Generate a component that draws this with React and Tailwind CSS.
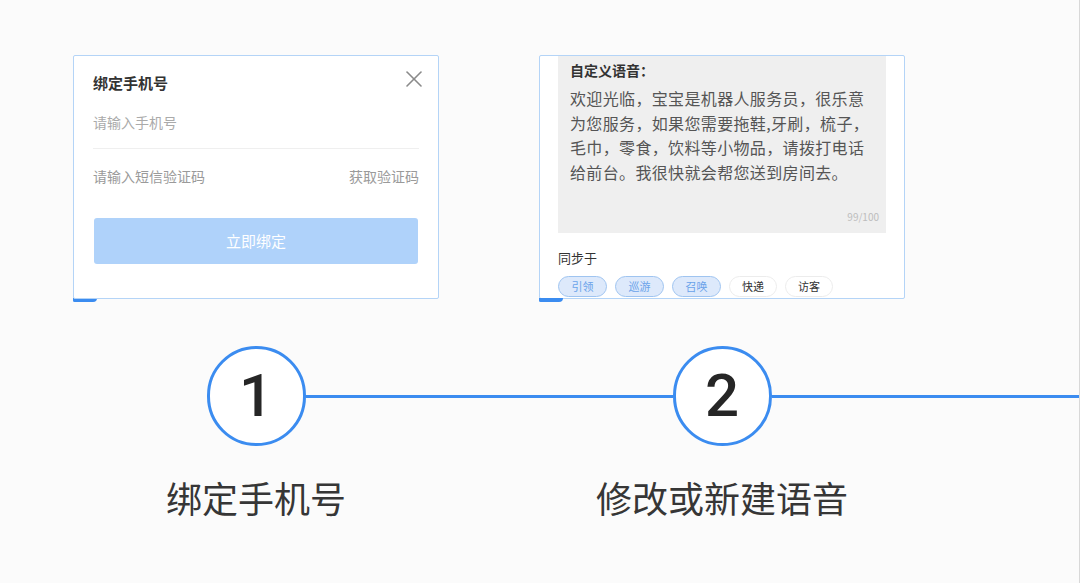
import React from "react";

const CJK = { fontFamily: '"Noto Sans CJK SC", "Noto Sans", sans-serif' };

function CloseIcon() {
  return (
    <svg width="18" height="18" viewBox="0 0 18 18" fill="none" stroke="#8a8a8a" strokeWidth="1.6" strokeLinecap="round">
      <path d="M2 2 L16 16" />
      <path d="M16 2 L2 16" />
    </svg>
  );
}

function BindPhoneCard() {
  return (
    <div className="relative w-[366px] h-[244px] bg-white border border-[#b4d4f7] rounded-[2px] px-[19px] pt-[17px] flex flex-col">
      <div className="absolute top-[14px] right-[15px]">
        <CloseIcon />
      </div>
      <div className="h-[20px] text-[15px] leading-[20px] font-bold text-[#333]">绑定手机号</div>
      <div className="mt-[19px] h-[20px] text-[14px] leading-[20px] text-[#aaaaaa]">请输入手机号</div>
      <div className="mt-[16px] h-px bg-[#efefef]" />
      <div className="mt-[17px] h-[20px] flex justify-between text-[14px] leading-[20px] text-[#9a9a9a]">
        <span>请输入短信验证码</span>
        <span>获取验证码</span>
      </div>
      <div className="mt-[32px] mx-[1px] h-[46px] rounded-[3px] bg-[#afd2fa] flex items-center justify-center text-[15px] text-white">
        立即绑定
      </div>
    </div>
  );
}

const tags = [
  { name: "引领", on: true },
  { name: "巡游", on: true },
  { name: "召唤", on: true },
  { name: "快递", on: false },
  { name: "访客", on: false },
];

function VoiceCard() {
  return (
    <div className="w-[366px] h-[244px] bg-white border border-[#b4d4f7] rounded-[2px] px-[18px] flex flex-col overflow-hidden">
      <div className="h-[177px] bg-[#efefef] pl-[12px] pt-[4px] flex flex-col">
        <div className="text-[14px] leading-[20px] font-bold text-[#333]">自定义语音：</div>
        <div className="mt-[6px] text-[16px] leading-[24.5px] text-[#555] tracking-[0.35px] whitespace-nowrap">
          欢迎光临，宝宝是机器人服务员，很乐意
          <br />
          为您服务，如果您需要拖鞋,牙刷，梳子，
          <br />
          毛巾，零食，饮料等小物品，请拨打电话
          <br />
          给前台。我很快就会帮您送到房间去。
        </div>
        <div className="mt-auto pb-[9px] pr-[7px] text-right text-[10px] leading-[14px] text-[#bdbdbd]">99/100</div>
      </div>
      <div className="mt-[16px] text-[13px] leading-[18px] text-[#333]">同步于</div>
      <div className="mt-[9px] flex gap-[8px]">
        {tags.map((t) => (
          <div
            key={t.name}
            className={
              t.on
                ? "w-[49px] h-[21px] shrink-0 rounded-full border border-[#9fc4f0] bg-[#dde9fb] text-[#6aa3ea] text-[11px] flex items-center justify-center"
                : "w-[48px] h-[21px] shrink-0 rounded-full border border-[#ececec] bg-white text-[#333] text-[11px] flex items-center justify-center"
            }
          >
            {t.name}
          </div>
        ))}
      </div>
    </div>
  );
}

function Step({ card, num, label, lineLeft, lineRight }) {
  return (
    <div className="w-[466px] shrink-0 flex flex-col items-center">
      <div className="w-[366px] flex flex-col">
        {card}
        <div className="-mt-[1px] w-[24px] h-[4px] bg-[#3b8cf0] rounded-bl-[3px] rounded-br-[8px]" />
      </div>
      <div className="mt-[44px] w-full h-[100px] flex items-center">
        <div className={lineLeft ? "flex-1 h-[3px] bg-[#3b8cf0]" : "flex-1 h-[3px]"} />
        <div
          className="w-[99px] h-[100px] rounded-full border-[3px] border-[#3b8cf0] bg-white flex items-center justify-center text-[60px] leading-none font-medium text-[#262626]"
          style={{ fontFamily: 'Roboto, "Liberation Sans", sans-serif' }}
        >
          {num}
        </div>
        <div className={lineRight ? "flex-1 h-[3px] bg-[#3b8cf0]" : "flex-1 h-[3px]"} />
      </div>
      <div className="mt-[33px] text-[36px] leading-[36px] text-[#363636]">{label}</div>
    </div>
  );
}

export default function App() {
  return (
    <div
      className="w-[1080px] h-[583px] overflow-hidden bg-[#fbfbfb] border-r border-[#d8d8d8] flex pt-[55px] pl-[23px]"
      style={CJK}
    >
      <Step card={<BindPhoneCard />} num="1" label="绑定手机号" lineLeft={false} lineRight />
      <Step card={<VoiceCard />} num="2" label="修改或新建语音" lineLeft lineRight />
      <div className="w-[466px] shrink-0 flex flex-col">
        <div className="h-[247px]" />
        <div className="mt-[44px] h-[100px] flex items-center">
          <div className="w-[184px] h-[3px] bg-[#3b8cf0]" />
        </div>
      </div>
    </div>
  );
}
